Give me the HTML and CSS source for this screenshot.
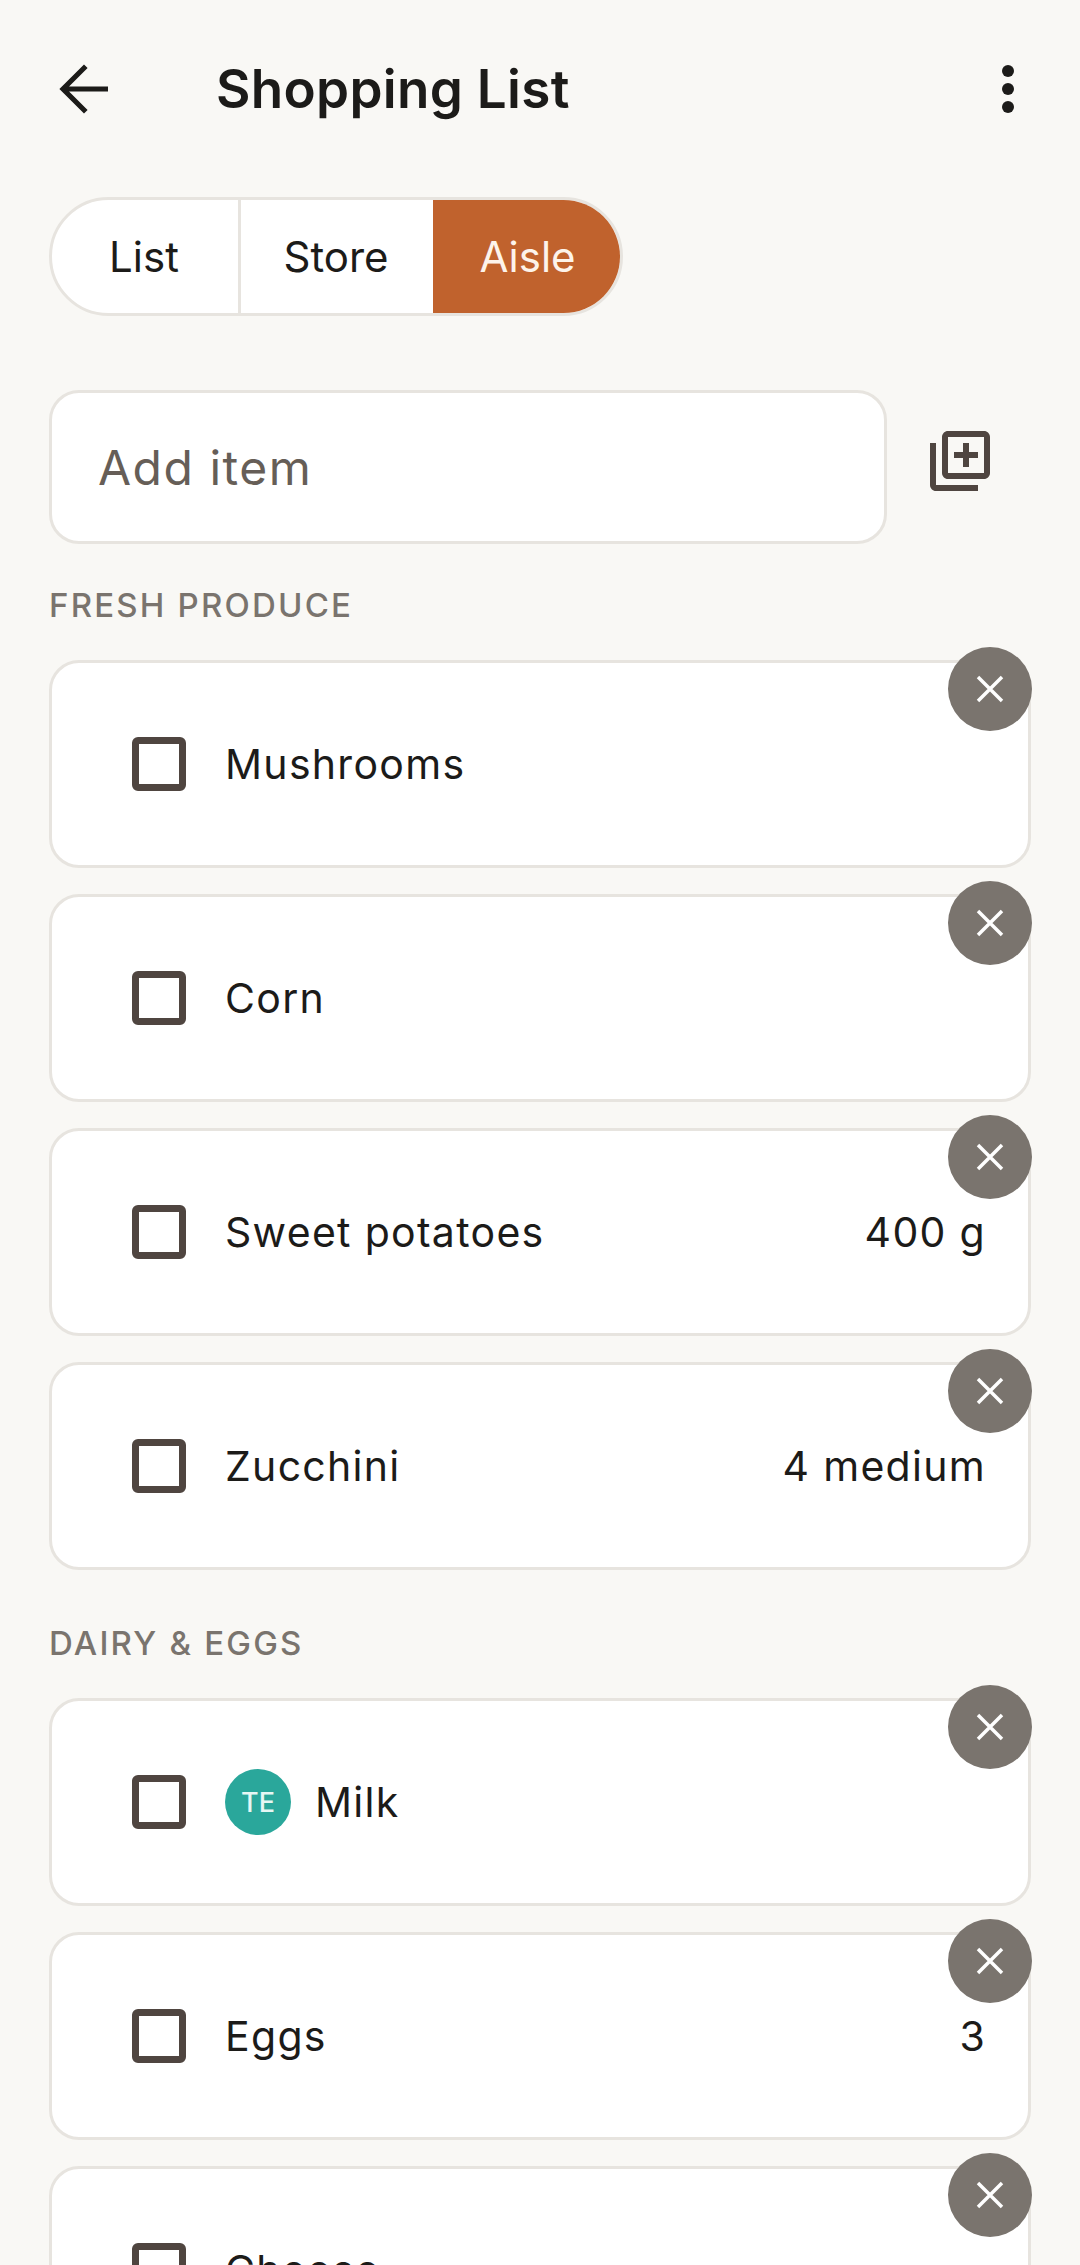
FILE: index.html
```html
<!DOCTYPE html>
<html lang="en">
<head>
<meta charset="utf-8">
<title>Shopping List</title>
<link rel="stylesheet" href="styles.css">
</head>
<body>
<main class="app">
  <header class="topbar">
    <svg class="icon back" viewBox="0 0 24 24"><path class="arrow" d="M20 12H5M12.6 4.4 5 12l7.6 7.6"/></svg>
    <h1 class="title">Shopping List</h1>
    <svg class="icon more" viewBox="0 0 24 24"><circle cx="12" cy="6" r="2"/><circle cx="12" cy="12" r="2"/><circle cx="12" cy="18" r="2"/></svg>
  </header>

  <div class="toggle">
    <div class="seg seg-list">List</div>
    <div class="seg seg-store">Store</div>
    <div class="seg seg-aisle">Aisle</div>
  </div>

  <div class="add-row">
    <div class="add-input">Add item</div>
    <svg class="icon add-icon" viewBox="0 0 24 24"><path d="M4 6H2v14c0 1.1.9 2 2 2h14v-2H4V6zm16-4H8c-1.1 0-2 .9-2 2v12c0 1.1.9 2 2 2h12c1.1 0 2-.9 2-2V4c0-1.1-.9-2-2-2zm0 14H8V4h12v12zm-2-5h-3v3h-2v-3h-3V9h3V6h2v3h3v2z"/></svg>
  </div>

  <section class="group group-first">
    <h2 class="group-label">FRESH PRODUCE</h2>
    <div class="items">
      <div class="item"><span class="check"></span><span class="name">Mushrooms</span><button class="del"><svg viewBox="0 0 24 24"><path d="M4 4 20 20M20 4 4 20"/></svg></button></div>
      <div class="item"><span class="check"></span><span class="name">Corn</span><button class="del"><svg viewBox="0 0 24 24"><path d="M4 4 20 20M20 4 4 20"/></svg></button></div>
      <div class="item"><span class="check"></span><span class="name">Sweet potatoes</span><span class="qty">400 g</span><button class="del"><svg viewBox="0 0 24 24"><path d="M4 4 20 20M20 4 4 20"/></svg></button></div>
      <div class="item"><span class="check"></span><span class="name">Zucchini</span><span class="qty">4 medium</span><button class="del"><svg viewBox="0 0 24 24"><path d="M4 4 20 20M20 4 4 20"/></svg></button></div>
    </div>
  </section>

  <section class="group">
    <h2 class="group-label">DAIRY &amp; EGGS</h2>
    <div class="items">
      <div class="item"><span class="check"></span><span class="avatar">TE</span><span class="name">Milk</span><button class="del"><svg viewBox="0 0 24 24"><path d="M4 4 20 20M20 4 4 20"/></svg></button></div>
      <div class="item"><span class="check"></span><span class="name">Eggs</span><span class="qty">3</span><button class="del"><svg viewBox="0 0 24 24"><path d="M4 4 20 20M20 4 4 20"/></svg></button></div>
      <div class="item"><span class="check"></span><span class="name">Cheese</span><button class="del"><svg viewBox="0 0 24 24"><path d="M4 4 20 20M20 4 4 20"/></svg></button></div>
    </div>
  </section>
</main>
</body>
</html>
```
FILE: styles.css
```css
* { box-sizing: border-box; }
html, body { margin: 0; padding: 0; }
body {
  height: 2265px;
  overflow: hidden;
  background: #f9f8f5;
  font-family: "Inter", "Liberation Sans", sans-serif;
  color: #1c1b19;
}
.app { padding: 53px 49px 0; }

.icon { display: block; width: 72px; height: 72px; flex: none; }

.topbar { display: flex; align-items: center; height: 72px; }
.back { margin-left: -1px; }
.arrow { fill: none; stroke: #1c1b19; stroke-width: 1.7; }
.title {
  margin: 0 0 0 96px;
  flex: 1;
  font-size: 53px;
  font-weight: 600;
  line-height: 72px;
  letter-spacing: 0.3px;
  color: #1c1b19;
}
.more { margin-right: -13px; fill: #1c1b19; }

.toggle {
  display: flex;
  width: 574px;
  height: 119px;
  margin-top: 72px;
  border: 3px solid #e7e4df;
  border-radius: 60px;
  background: #fff;
  overflow: hidden;
  font-size: 42px;
}
.seg { display: flex; align-items: center; justify-content: center; }
.seg-list { width: 189px; padding-right: 2px; border-right: 3px solid #e7e4df; }
.seg-store { width: 192px; padding-right: 2px; }
.seg-aisle { flex: 1; padding-left: 2px; background: #c0622d; color: #fdf3ea; }

.add-row { display: flex; align-items: flex-start; margin-top: 74px; }
.add-input {
  display: flex;
  align-items: center;
  width: 838px;
  height: 154px;
  padding-left: 46px;
  border: 3px solid #e7e4df;
  border-radius: 30px;
  background: #fff;
  font-size: 48px;
  letter-spacing: 1.5px;
  color: #665e57;
}
.add-icon { margin: 35px 0 0 37px; fill: #4f4540; }

.group { margin-top: 53px; }
.group-first { margin-top: 41px; }
.group-label {
  margin: 0 0 35px;
  font-size: 33px;
  font-weight: 500;
  line-height: 40px;
  letter-spacing: 2.2px;
  color: #7a746e;
}
.items { display: flex; flex-direction: column; gap: 26px; }

.item {
  position: relative;
  display: flex;
  align-items: center;
  height: 208px;
  padding: 0 42px 0 80px;
  border: 3px solid #e7e4df;
  border-radius: 30px;
  background: #fff;
  font-size: 41px;
  letter-spacing: 1.3px;
}
.check {
  flex: none;
  width: 54px;
  height: 54px;
  border: 7px solid #4f4540;
  border-radius: 6px;
}
.name { margin-left: 39px; flex: 1; }
.avatar {
  display: flex;
  align-items: center;
  justify-content: center;
  flex: none;
  width: 66px;
  height: 66px;
  margin-left: 39px;
  border-radius: 50%;
  background: #2aa79b;
  color: #e6f7f4;
  font-size: 27px;
  font-weight: 500;
  letter-spacing: 0;
}
.avatar + .name { margin-left: 24px; }
.qty { flex: none; }
.del {
  position: absolute;
  top: -16px;
  right: -4px;
  display: flex;
  align-items: center;
  justify-content: center;
  width: 84px;
  height: 84px;
  padding: 0;
  border: none;
  border-radius: 50%;
  background: #7a746e;
}
.del svg { width: 36px; height: 36px; fill: none; stroke: #fff; stroke-width: 2.3; }
```
